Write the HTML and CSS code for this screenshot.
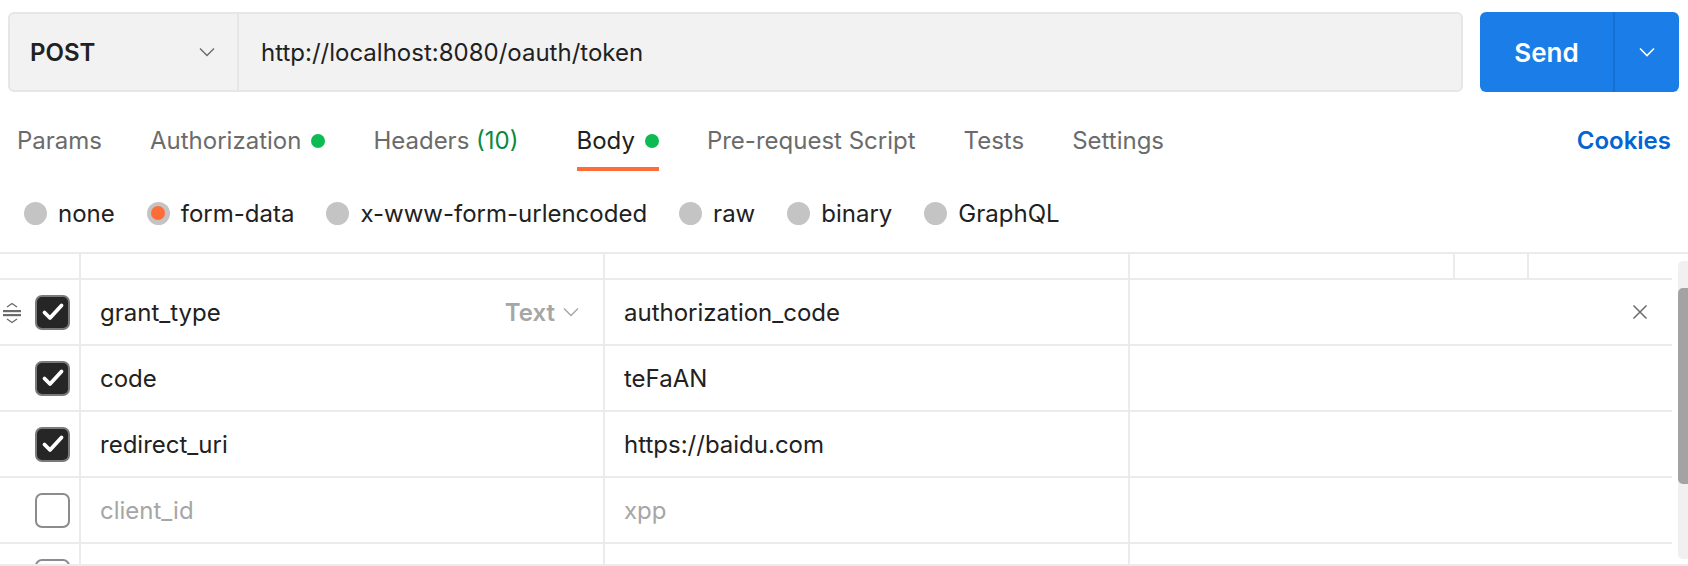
FILE: index.html
```html
<!DOCTYPE html>
<html>
<head>
<meta charset="utf-8">
<link rel="stylesheet" href="styles.css">
</head>
<body>
<div class="app">
  <div class="request-bar">
    <div class="url-box">
      <div class="method">
        <span class="method-name">POST</span>
        <svg class="chev" width="16" height="10" viewBox="0 0 16 10"><path d="M1 1.5 L8 8.5 L15 1.5" fill="none" stroke="#6b6b6b" stroke-width="1.4"/></svg>
      </div>
      <div class="url">http://localhost:8080/oauth/token</div>
    </div>
    <div class="send">
      <span class="send-label">Send</span>
      <span class="send-drop"><svg width="16" height="10" viewBox="0 0 16 10"><path d="M1 1.5 L8 8.5 L15 1.5" fill="none" stroke="#fff" stroke-width="1.6"/></svg></span>
    </div>
  </div>

  <div class="tabs">
    <div class="tab">Params</div>
    <div class="tab">Authorization<span class="dot"></span></div>
    <div class="tab headers">Headers <span class="count">(10)</span></div>
    <div class="tab active">Body<span class="dot"></span></div>
    <div class="tab">Pre-request Script</div>
    <div class="tab">Tests</div>
    <div class="tab">Settings</div>
    <div class="tab cookies">Cookies</div>
  </div>

  <div class="body-types">
    <label class="radio"><span class="circle"></span>none</label>
    <label class="radio"><span class="circle on"></span>form-data</label>
    <label class="radio"><span class="circle"></span>x-www-form-urlencoded</label>
    <label class="radio"><span class="circle"></span>raw</label>
    <label class="radio"><span class="circle"></span>binary</label>
    <label class="radio"><span class="circle"></span>GraphQL</label>
  </div>

  <div class="table-wrap">
    <div class="table">
      <div class="row head">
        <div class="c c-sel"></div>
        <div class="c c-key"></div>
        <div class="c c-val"></div>
        <div class="c c-desc"></div>
        <div class="c c-extra"></div>
        <div class="c c-extra2"></div>
      </div>
      <div class="row">
        <div class="c c-sel">
          <svg class="drag" width="20" height="22" viewBox="0 0 20 22"><path d="M5 5 L10 1.5 L15 5" fill="none" stroke="#6b6b6b" stroke-width="1.4"/><rect x="1" y="8" width="18" height="2.2" fill="#6b6b6b"/><rect x="1" y="12" width="18" height="2.2" fill="#6b6b6b"/><path d="M5 17 L10 20.5 L15 17" fill="none" stroke="#6b6b6b" stroke-width="1.4"/></svg>
          <span class="check on"><svg width="24" height="20" viewBox="0 0 24 20"><path d="M3.5 10.5 L9 16 L20.5 3.5" fill="none" stroke="#fff" stroke-width="3.8" stroke-linecap="round" stroke-linejoin="round"/></svg></span>
        </div>
        <div class="c c-key"><span>grant_type</span><span class="type">Text<svg width="16" height="10" viewBox="0 0 16 10"><path d="M1 1.5 L8 8.5 L15 1.5" fill="none" stroke="#a6a6a6" stroke-width="1.4"/></svg></span></div>
        <div class="c c-val">authorization_code</div>
        <div class="c c-desc c-wide"><svg class="x" width="16" height="16" viewBox="0 0 16 16"><path d="M1.5 1.5 L14.5 14.5 M14.5 1.5 L1.5 14.5" stroke="#6b6b6b" stroke-width="1.5"/></svg></div>
      </div>
      <div class="row">
        <div class="c c-sel"><span class="check on"><svg width="24" height="20" viewBox="0 0 24 20"><path d="M3.5 10.5 L9 16 L20.5 3.5" fill="none" stroke="#fff" stroke-width="3.8" stroke-linecap="round" stroke-linejoin="round"/></svg></span></div>
        <div class="c c-key">code</div>
        <div class="c c-val">teFaAN</div>
        <div class="c c-desc c-wide"></div>
      </div>
      <div class="row">
        <div class="c c-sel"><span class="check on"><svg width="24" height="20" viewBox="0 0 24 20"><path d="M3.5 10.5 L9 16 L20.5 3.5" fill="none" stroke="#fff" stroke-width="3.8" stroke-linecap="round" stroke-linejoin="round"/></svg></span></div>
        <div class="c c-key">redirect_uri</div>
        <div class="c c-val">https://baidu.com</div>
        <div class="c c-desc c-wide"></div>
      </div>
      <div class="row off">
        <div class="c c-sel"><span class="check"></span></div>
        <div class="c c-key">client_id</div>
        <div class="c c-val">xpp</div>
        <div class="c c-desc c-wide"></div>
      </div>
      <div class="row off">
        <div class="c c-sel"><span class="check"></span></div>
        <div class="c c-key"></div>
        <div class="c c-val"></div>
        <div class="c c-desc c-wide"></div>
      </div>
    </div>
    <div class="scrollbar"><div class="thumb"></div></div>
  </div>
</div>
</body>
</html>
```

FILE: styles.css
```css
* { box-sizing: border-box; }
html, body { margin: 0; padding: 0; background: #fff; }
body {
  font-family: Inter, "Noto Sans", sans-serif;
  font-size: 24px;
  color: #212121;
  width: 1688px;
  height: 566px;
  overflow: hidden;
}
.app { display: flex; flex-direction: column; height: 566px; }

.request-bar {
  display: flex;
  padding: 12px 9px 0 8px;
  gap: 17px;
}
.url-box {
  flex: 1;
  height: 80px;
  display: flex;
  background: #f2f2f2;
  border: 2px solid #e6e6e6;
  border-radius: 6px;
}
.method {
  width: 229px;
  display: flex;
  align-items: center;
  justify-content: space-between;
  padding: 0 22px 0 20px;
  border-right: 2px solid #e6e6e6;
}
.method-name { font-weight: 600; color: #212121; }
.url {
  display: flex;
  align-items: center;
  padding-left: 22px;
  color: #212121;
}
.send {
  width: 199px;
  height: 80px;
  display: flex;
  background: #1b7ee8;
  border-radius: 6px;
  color: #fff;
}
.send-label {
  width: 135px;
  display: flex;
  align-items: center;
  justify-content: center;
  font-weight: 600;
  font-size: 26px;
  border-right: 2px solid #1670d4;
}
.send-drop {
  flex: 1;
  display: flex;
  align-items: center;
  justify-content: center;
}

.tabs {
  display: flex;
  align-items: flex-start;
  padding: 0 17px 0 17px;
  margin-top: 22px;
  height: 74px;
}
.tab {
  display: flex;
  align-items: center;
  height: 57px;
  color: #6b6b6b;
  margin-right: 48px;
  border-bottom: 4px solid transparent;
  white-space: pre;
}
.tab.headers { margin-right: 58px; }
.tab.active { color: #212121; border-bottom-color: #ff6c37; }
.tab .count { color: #0a8a3e; }
.dot {
  width: 14px;
  height: 14px;
  border-radius: 50%;
  background: #0cbb52;
  margin-left: 10px;
}
.tab.cookies {
  margin-left: auto;
  margin-right: 0;
  color: #0265d2;
  font-weight: 600;
}

.body-types {
  display: flex;
  align-items: center;
  height: 50px;
  margin-bottom: 14px;
  padding-left: 24px;
  gap: 32px;
}
.radio { display: flex; align-items: center; color: #212121; }
.circle {
  width: 23px;
  height: 23px;
  border-radius: 50%;
  background: #c4c4c4;
  margin-right: 11px;
  display: flex;
  align-items: center;
  justify-content: center;
}
.circle.on::after {
  content: "";
  width: 14px;
  height: 14px;
  border-radius: 50%;
  background: #ff6c37;
}

.table-wrap {
  display: flex;
  flex: 1;
  min-height: 0;
  overflow: hidden;
  border-top: 2px solid #ebebeb;
  border-bottom: 2px solid #ebebeb;
}
.table { width: 1672px; }
.row {
  display: flex;
  height: 66px;
  border-bottom: 2px solid #ebebeb;
}
.row.head { height: 26px; }
.c {
  display: flex;
  align-items: center;
  border-right: 2px solid #ebebeb;
}
.c-sel { width: 81px; justify-content: flex-end; padding-right: 9px; position: relative; }
.c-key { width: 524px; padding: 0 24px 0 19px; justify-content: space-between; }
.c-val { width: 525px; padding-left: 19px; }
.c-desc { width: 325px; }
.c-extra { width: 74px; }
.c-extra2 { flex: 1; border-right: none; }
.c-wide { flex: 1; border-right: none; justify-content: flex-end; padding-right: 24px; }
.row.off .c { color: #a6a6a6; }

.drag { position: absolute; left: 2px; top: 22px; }
.check {
  width: 35px;
  height: 35px;
  border-radius: 7px;
  border: 2px solid #8c8c8c;
  background: #fff;
  display: flex;
  align-items: center;
  justify-content: center;
}
.check.on { background: #262626; border-color: #7a7a7a; }

.type {
  display: flex;
  align-items: center;
  gap: 8px;
  color: #a6a6a6;
  font-weight: 600;
}

.scrollbar {
  width: 10px;
  margin-left: 6px;
  margin-top: 7px;
  height: 298px;
  background: #f0f0f0;
  border-radius: 5px 0 0 5px;
  padding-top: 27px;
}
.thumb {
  height: 196px;
  background: #a3a3a3;
  border-radius: 5px 0 0 5px;
}
```
